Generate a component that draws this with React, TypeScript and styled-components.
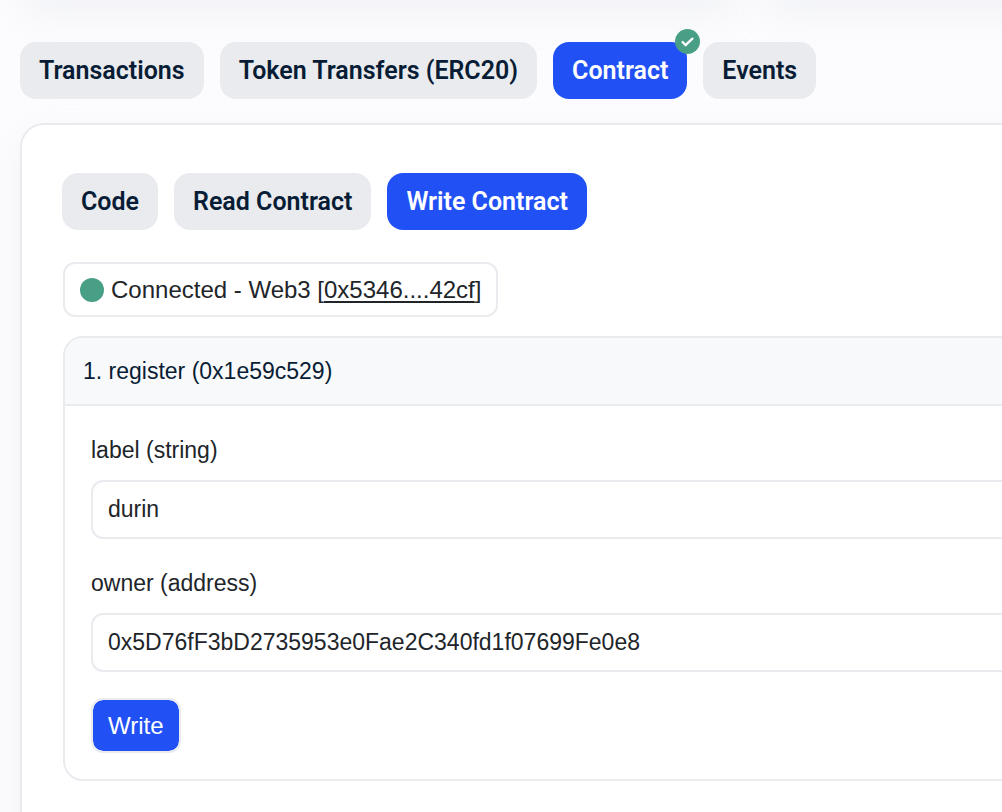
import React, { useState } from "react";
import styled, { createGlobalStyle } from "styled-components";

const color = {
  ink: "#081d35",
  text: "#212529",
  blue: "#2151f5",
  green: "#489f86",
  line: "#e9ebef",
  tab: "#e9ebef",
  head: "#f8f9fb",
};

const shadow = "0 16px 38px rgba(189, 195, 204, 0.16)";

const GlobalStyle = createGlobalStyle`
  *, *::before, *::after { box-sizing: border-box; }
  body {
    margin: 0;
    background: #fcfcfe;
    color: ${color.text};
    font-family: "Liberation Sans", Arial, sans-serif;
    font-size: 24px;
    line-height: 36px;
  }
  button, input { font: inherit; color: inherit; }
`;

const Page = styled.main`
  display: flex;
  flex-direction: column;
  min-height: 100vh;
  padding-left: 20px;
  overflow: hidden;
`;

const Summary = styled.div`
  display: flex;
  gap: 24px;
  height: 48px;
  margin-top: -50px;
  margin-right: -480px;
`;

const SummaryCard = styled.div`
  flex: 1;
  border-radius: 24px;
  background: #fff;
  box-shadow: ${shadow};
`;

const Tabs = styled.nav<{ $spaced?: boolean }>`
  display: flex;
  gap: 16px;
  margin-top: ${(p) => (p.$spaced ? "44px" : "0")};
`;

const Tab = styled.button<{ $active?: boolean }>`
  position: relative;
  height: 57px;
  padding: 0 19px;
  border: 0;
  border-radius: 16px;
  background: ${(p) => (p.$active ? color.blue : color.tab)};
  color: ${(p) => (p.$active ? "#fff" : color.ink)};
  font-family: Roboto, sans-serif;
  font-size: 25px;
  font-weight: 600;
  white-space: nowrap;
  cursor: pointer;
`;

const Badge = styled.svg`
  position: absolute;
  top: -13px;
  right: -13px;
  width: 25px;
  height: 25px;
`;

const Card = styled.section`
  flex: 1 0 auto;
  margin: 24px -120px -40px 0;
  padding: 48px 40px 72px;
  border: 2px solid ${color.line};
  border-radius: 24px;
  background: #fff;
  box-shadow: ${shadow};
`;

const Content = styled.div`
  margin: 32px 1px 0;
`;

const Connection = styled.div`
  display: inline-flex;
  align-items: center;
  gap: 7px;
  height: 55px;
  padding: 0 15px;
  border: 2px solid ${color.line};
  border-radius: 12px;
`;

const Dot = styled.span`
  width: 24px;
  height: 24px;
  border-radius: 50%;
  background: ${color.green};
`;

const Address = styled.a`
  color: inherit;
  text-decoration: underline;
  text-decoration-thickness: 2px;
  text-underline-offset: 3px;
  text-decoration-skip-ink: none;
`;

const Panel = styled.form`
  margin-top: 19px;
  border: 2px solid ${color.line};
  border-radius: 20px;
  overflow: hidden;
`;

const PanelHead = styled.h2`
  margin: 0;
  padding: 15px 18px;
  border-bottom: 2px solid ${color.line};
  background: ${color.head};
  color: ${color.ink};
  font-size: 23px;
  font-weight: 400;
`;

const PanelBody = styled.div`
  display: flex;
  flex-direction: column;
  align-items: flex-start;
  gap: 26px;
  padding: 26px;
`;

const Field = styled.div`
  display: flex;
  flex-direction: column;
  gap: 12px;
  width: 100%;
  font-size: 23px;
`;

const Input = styled.input`
  width: 100%;
  height: 59px;
  padding: 0 15px;
  border: 2px solid ${color.line};
  border-radius: 12px;
  background: #fff;
  outline: 0;
`;

const WriteButton = styled.button`
  height: 55px;
  padding: 0 15px;
  border: 2px solid ${color.line};
  border-radius: 12px;
  background: ${color.blue};
  background-clip: padding-box;
  color: #fff;
  cursor: pointer;
`;

const mainTabs = ["Transactions", "Token Transfers (ERC20)", "Contract", "Events"];
const contractTabs = ["Code", "Read Contract", "Write Contract"];

export default function App() {
  const [tab, setTab] = useState("Contract");
  const [subTab, setSubTab] = useState("Write Contract");
  const [label, setLabel] = useState("durin");
  const [owner, setOwner] = useState("0x5D76fF3bD2735953e0Fae2C340fd1f07699Fe0e8");

  return (
    <>
      <GlobalStyle />
      <Page>
        <Summary>
          <SummaryCard />
          <SummaryCard />
        </Summary>
        <Tabs $spaced>
          {mainTabs.map((name) => (
            <Tab key={name} type="button" $active={tab === name} onClick={() => setTab(name)}>
              {name}
              {name === "Contract" && (
                <Badge viewBox="0 0 25 25" aria-hidden="true">
                  <circle cx="12.5" cy="12.5" r="12.5" fill={color.green} />
                  <path
                    d="M7.6 13l3 3.2 6.8-6.6"
                    fill="none"
                    stroke="#fff"
                    strokeWidth="2.3"
                    strokeLinecap="round"
                    strokeLinejoin="round"
                  />
                </Badge>
              )}
            </Tab>
          ))}
        </Tabs>
        <Card>
          <Tabs>
            {contractTabs.map((name) => (
              <Tab key={name} type="button" $active={subTab === name} onClick={() => setSubTab(name)}>
                {name}
              </Tab>
            ))}
          </Tabs>
          <Content>
            <Connection>
              <Dot />
              <span>
                Connected - Web3 [<Address href="#address">0x5346....42cf</Address>]
              </span>
            </Connection>
            <Panel onSubmit={(e) => e.preventDefault()}>
              <PanelHead>1. register (0x1e59c529)</PanelHead>
              <PanelBody>
                <Field>
                  <label htmlFor="label">label (string)</label>
                  <Input id="label" value={label} onChange={(e) => setLabel(e.target.value)} />
                </Field>
                <Field>
                  <label htmlFor="owner">owner (address)</label>
                  <Input id="owner" value={owner} onChange={(e) => setOwner(e.target.value)} />
                </Field>
                <WriteButton type="submit">Write</WriteButton>
              </PanelBody>
            </Panel>
          </Content>
        </Card>
      </Page>
    </>
  );
}
